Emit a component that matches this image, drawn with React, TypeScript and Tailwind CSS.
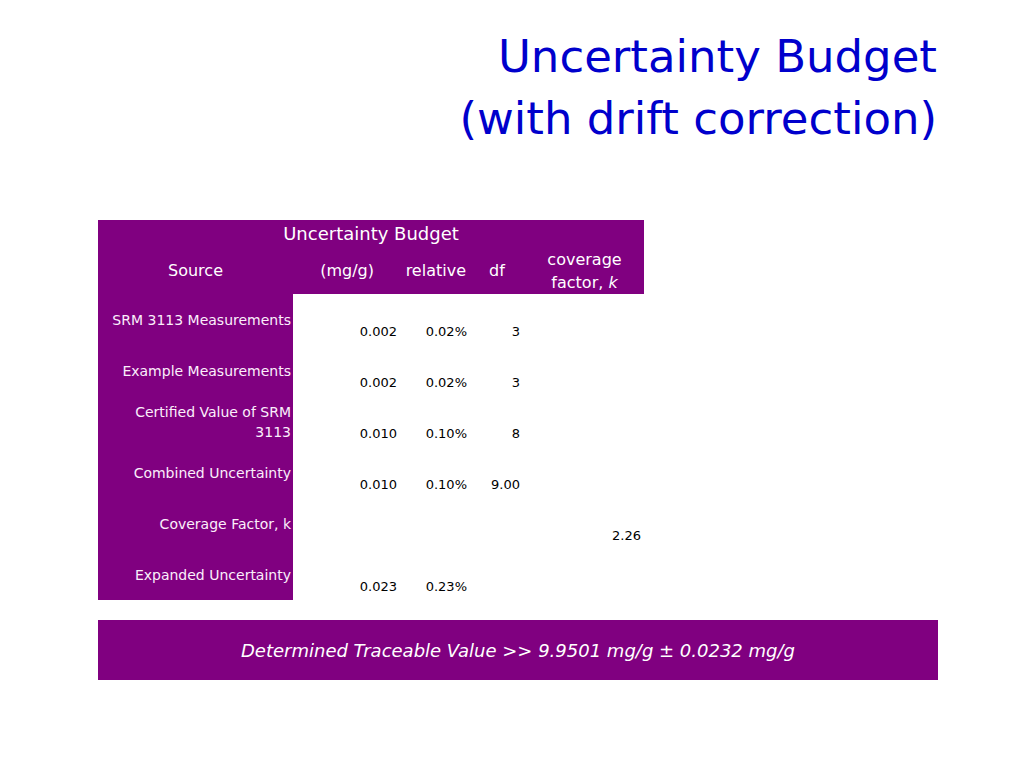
const rows = [
  { label: ['SRM 3113 Measurements'], abs: '0.002', rel: '0.02%', df: '3', k: '' },
  { label: ['Example Measurements'], abs: '0.002', rel: '0.02%', df: '3', k: '' },
  { label: ['Certified Value of SRM', '3113'], abs: '0.010', rel: '0.10%', df: '8', k: '' },
  { label: ['Combined Uncertainty'], abs: '0.010', rel: '0.10%', df: '9.00', k: '' },
  { label: ['Coverage Factor, k'], abs: '', rel: '', df: '', k: '2.26' },
  { label: ['Expanded Uncertainty'], abs: '0.023', rel: '0.23%', df: '', k: '' },
];

const cols = 'grid grid-cols-[195px_107px_75px_50px_119px]';

export default function App() {
  return (
    <div className="w-[1024px] h-[768px] bg-white font-['DejaVu_Sans',sans-serif] overflow-hidden">
      <div className="pt-[26px] pr-[87px] text-right text-[#0000cc] text-[45px] leading-[62px]">
        <div>Uncertainty Budget</div>
        <div>(with drift correction)</div>
      </div>

      <div className="ml-[98px] mt-[70px] w-[546px] text-[13px]">
        <div className="bg-[#800080] text-white h-[74px] flex flex-col">
          <div className="text-center text-[18px] leading-[26px] pt-[1px]">Uncertainty Budget</div>
          <div className={cols + ' flex-1 items-center text-[16px]'}>
            <div className="text-center">Source</div>
            <div className="text-right pr-[26px]">(mg/g)</div>
            <div className="text-right pr-[9px]">relative</div>
            <div className="text-left pl-[14px]">df</div>
            <div className="text-center leading-[23px]">
              coverage
              <br />
              factor, <i>k</i>
            </div>
          </div>
        </div>
        {rows.map((r) => (
          <div key={r.label.join(' ')} className={cols + ' h-[51px]'}>
            <div className="bg-[#800080] text-[#fbeefb] text-[14px] text-right pr-[2px] flex flex-col justify-center leading-[20px]">
              {r.label.map((l) => (
                <div key={l}>{l}</div>
              ))}
            </div>
            <div className="text-right pr-[3px] self-end pb-[4px]">{r.abs}</div>
            <div className="text-right pr-[8px] self-end pb-[4px]">{r.rel}</div>
            <div className="text-right pr-[5px] self-end pb-[4px]">{r.df}</div>
            <div className="text-right pr-[3px] self-end pb-[4px]">{r.k}</div>
          </div>
        ))}
      </div>

      <div className="ml-[98px] mt-[20px] w-[840px] h-[60px] bg-[#800080] text-white italic text-[18px] flex items-center justify-center">
        Determined Traceable Value &gt;&gt; 9.9501 mg/g ± 0.0232 mg/g
      </div>
    </div>
  );
}
